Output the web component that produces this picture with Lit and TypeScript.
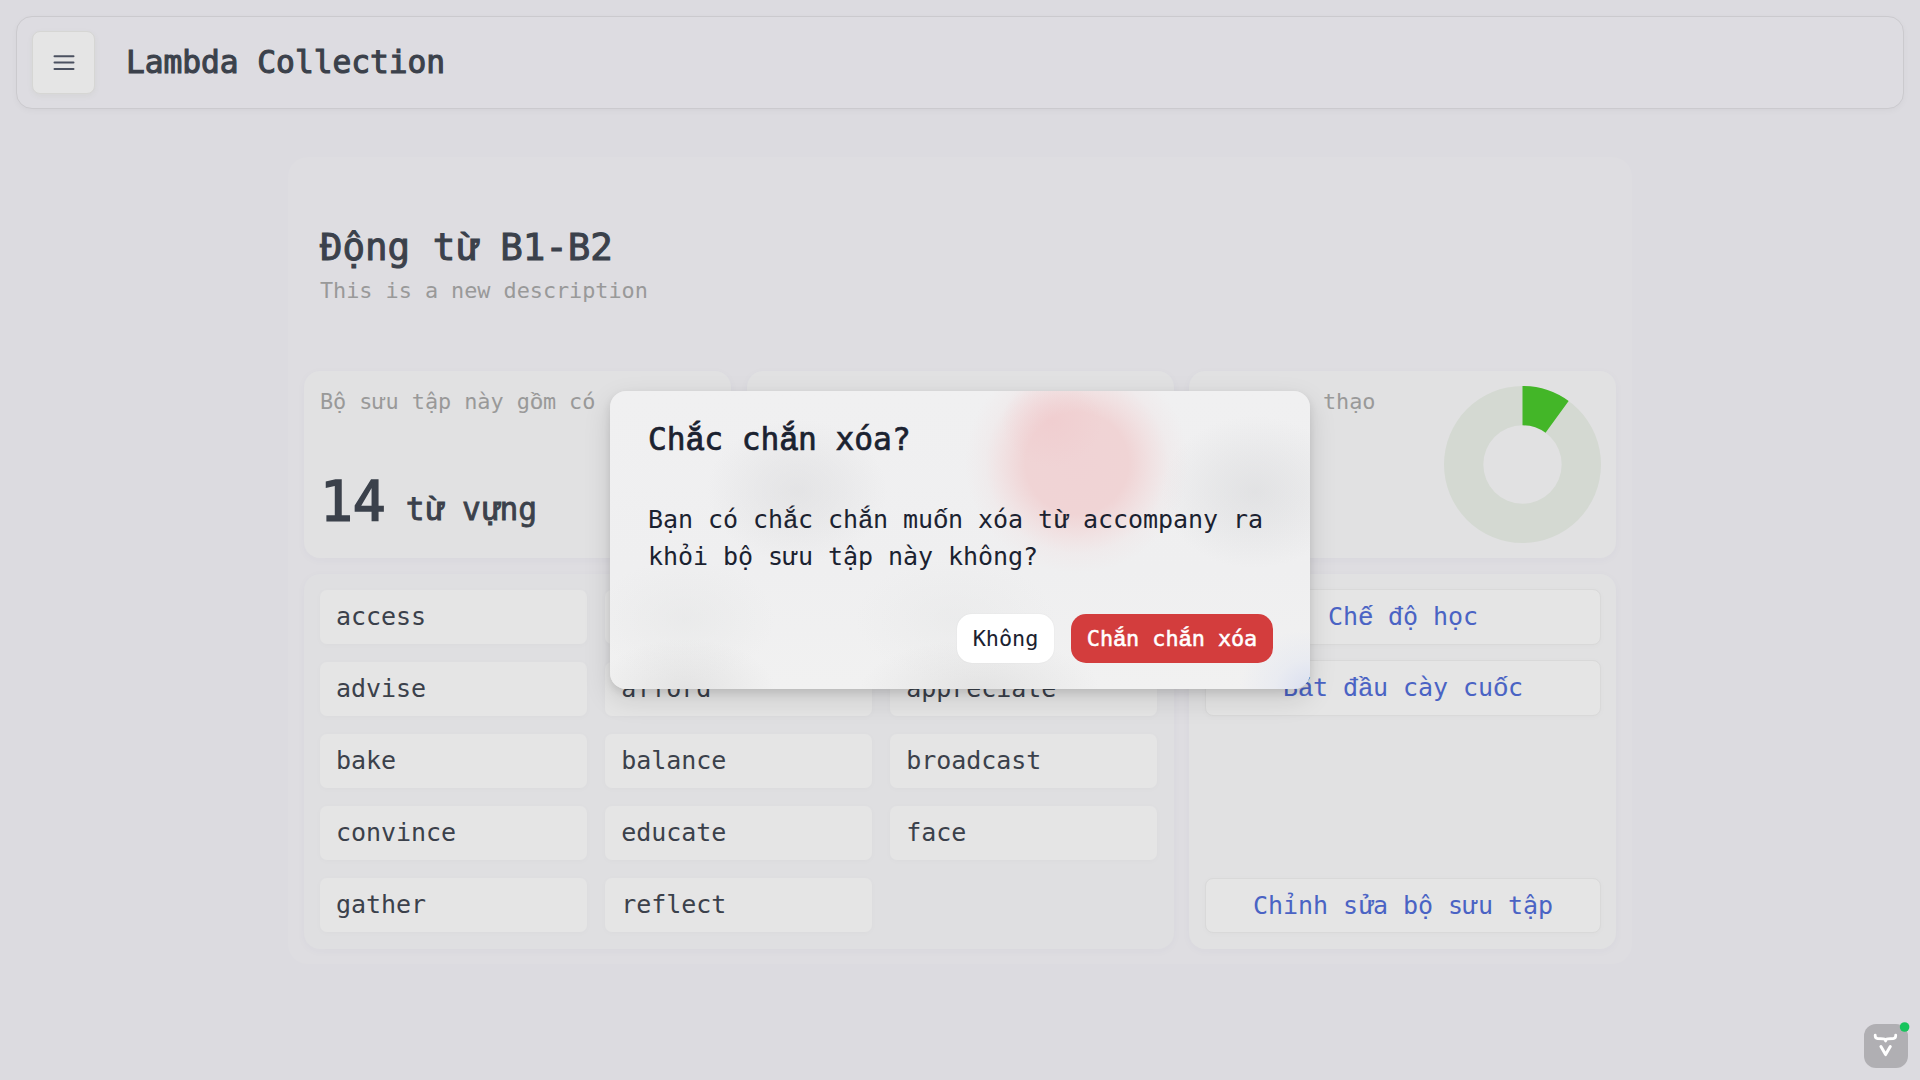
import { LitElement, html, css, svg } from "lit";
import { customElement, property } from "lit/decorators.js";

const WORDS = [
  "access", "", "",
  "advise", "afford", "appreciate",
  "bake", "balance", "broadcast",
  "convince", "educate", "face",
  "gather", "reflect",
];

const STACKED = /([ắấầếốồừửự])/;

const viet = (text: string) =>
  text.split(STACKED).map((part) => (STACKED.test(part) ? html`<span class="stacked">${part}</span>` : part));

const stackedStyle = css`
  .stacked {
    font-family: "Liberation Mono", monospace; font-size: 1.035em; letter-spacing: -0.021em;
    line-height: 0; -webkit-text-stroke-width: calc(var(--stroke, 0px) + 0.2px);
  }
`;

@customElement("share-donut")
class ShareDonut extends LitElement {
  @property({ type: Number }) share = 0;

  static styles = css`
    :host { display: block; width: 157px; height: 157px; flex: none; }
    .chart { display: block; width: 157px; height: 157px; }
    .track { fill: #d4d9d2; }
    .part { fill: #43b628; }
  `;

  render() {
    const c = 78.5, r = 78.5, i = 39.2;
    const a = this.share * Math.PI * 2;
    const large = this.share > 0.5 ? 1 : 0;
    const s = Math.sin(a), k = Math.cos(a);
    const part = `M${c} ${c - r}A${r} ${r} 0 ${large} 1 ${c + r * s} ${c - r * k}L${c + i * s} ${c - i * k}A${i} ${i} 0 ${large} 0 ${c} ${c - i}Z`;
    const track = `M${c} 0A${r} ${r} 0 0 1 ${c} 157A${r} ${r} 0 0 1 ${c} 0ZM${c} ${c - i}A${i} ${i} 0 0 0 ${c} ${c + i}A${i} ${i} 0 0 0 ${c} ${c - i}Z`;
    return html`<svg class="chart" viewBox="0 0 157 157">
      ${svg`<path class="track" d=${track}></path><path class="part" d=${part}></path>`}
    </svg>`;
  }
}

@customElement("confirm-dialog")
class ConfirmDialog extends LitElement {
  static styles = [stackedStyle, css`
    :host {
      display: flex; flex-direction: column; box-sizing: border-box;
      width: 700px; height: 298px; padding: 25px 37px 26px 38px; border-radius: 16px;
      background:
        radial-gradient(ellipse 90px 72px at 187px 100px, rgba(214, 214, 216, 0.45), rgba(214, 214, 216, 0.27) 45%, rgba(214, 214, 216, 0)),
        radial-gradient(ellipse 94px 76px at 645px 101px, rgba(210, 211, 213, 0.47), rgba(210, 211, 213, 0.28) 45%, rgba(210, 211, 213, 0)),
        radial-gradient(ellipse 50px 46px at 442px 30px, rgba(240, 200, 203, 0.5), rgba(240, 200, 203, 0)),
        radial-gradient(ellipse 112px 110px at 467px 72px, #f0d3d5 0, #f0d4d5 46%, rgba(241, 220, 221, 0.75) 65%, rgba(240, 230, 231, 0.45) 82%, rgba(240, 235, 236, 0)),
        radial-gradient(ellipse 70px 60px at 700px 298px, #dadff0, rgba(226, 230, 241, 0.5) 50%, rgba(240, 240, 240, 0)),
        radial-gradient(ellipse 90px 50px at 75px 298px, rgba(218, 218, 218, 0.6), rgba(226, 226, 226, 0)),
        radial-gradient(ellipse 120px 50px at 370px 298px, rgba(218, 218, 218, 0.6), rgba(226, 226, 226, 0)),
        radial-gradient(ellipse 90px 60px at 75px 228px, rgba(228, 229, 229, 0.5), rgba(228, 229, 229, 0)),
        radial-gradient(ellipse 100px 60px at 345px 228px, rgba(228, 229, 229, 0.4), rgba(228, 229, 229, 0)),
        linear-gradient(#f0f0f1, #efeff0 60%, #f1f1f1);
      box-shadow: 0 4px 8px rgba(0, 0, 0, 0.1), 0 10px 28px rgba(0, 0, 0, 0.12);
      color: #1b2230;
    }
    .title { --stroke: 0.7px; margin: 0; font-size: 31.25px; line-height: 46px; font-weight: 400; -webkit-text-stroke: var(--stroke) currentColor; }
    .body { margin: 39px 0 0; font-size: 25px; line-height: 37px; white-space: nowrap; }
    .actions { display: flex; justify-content: flex-end; gap: 17px; margin-top: auto; }
    .btn {
      box-sizing: border-box; height: 49px; padding: 0; border: 0; border-radius: 15px;
      font: inherit; letter-spacing: inherit; font-size: 21.875px; line-height: 46px; white-space: nowrap;
    }
    .plain { width: 97px; background: #fff; color: #1b2230; box-shadow: 0 0 2px rgba(0, 0, 0, 0.06); }
    .danger { --stroke: 0.5px; width: 202px; background: #d33d3d; color: #fff; -webkit-text-stroke: var(--stroke) currentColor; }
  `];

  render() {
    return html`
      <h2 class="title">${viet("Chắc chắn xóa?")}</h2>
      <p class="body">${viet("Bạn có chắc chắn muốn xóa từ accompany ra")}<br />${viet("khỏi bộ sưu tập này không?")}</p>
      <div class="actions">
        <button class="btn plain">Không</button>
        <button class="btn danger">${viet("Chắn chắn xóa")}</button>
      </div>
    `;
  }
}

@customElement("app-root")
class AppRoot extends LitElement {
  static styles = [stackedStyle, css`
    :host {
      display: block; position: relative; width: 1920px; height: 1080px; overflow: hidden;
      box-sizing: border-box; padding: 16px; background: #dcdbe0; color: #3b414b;
      font-family: "DejaVu Sans Mono", "Liberation Mono", monospace;
      font-size: 25px; letter-spacing: -0.05px;
    }
    .bar {
      display: flex; align-items: center; box-sizing: border-box; height: 93px; padding: 0 15px;
      border: 1px solid #cbcace; border-radius: 16px; background: #dddce1;
      box-shadow: 0 2px 6px rgba(0, 0, 0, 0.035);
    }
    .menu {
      display: grid; place-items: center; box-sizing: border-box; width: 63px; height: 63px;
      border: 1px solid #d6d6d4; border-radius: 8px; background: #e5e5e5; padding: 0;
      box-shadow: 0 2px 6px rgba(80, 90, 40, 0.05);
    }
    .menu-icon { width: 22px; height: 16px; fill: none; stroke: #4b5160; stroke-width: 2; stroke-linecap: round; }
    .brand { margin: 0 0 2px 31px; font-size: 31.25px; font-weight: 400; -webkit-text-stroke: 1.1px currentColor; }
    .panel {
      display: flex; flex-direction: column; box-sizing: border-box; width: 1344px; height: 807px;
      margin: 48px auto 0; padding: 0 16px 15px; border-radius: 20px; background: #dedde1;
    }
    .intro { height: 214px; box-sizing: border-box; padding: 62px 16px 0; }
    .name { --stroke: 1px; margin: 0; font-size: 37.5px; line-height: 56px; font-weight: 400; -webkit-text-stroke: var(--stroke) currentColor; }
    .muted { font-size: 21.875px; line-height: 32px; color: #999; }
    .cards { display: grid; grid-template-columns: repeat(3, 1fr); column-gap: 15.5px; row-gap: 16px; grid-template-rows: 187px 375px; }
    .card {
      box-sizing: border-box; border-radius: 16px; background: #e1e1e2;
      box-shadow: 0 2px 10px rgba(70, 50, 120, 0.03);
    }
    .stat { display: flex; justify-content: space-between; padding: 15px 15px 15px 16px; }
    .figure { display: flex; flex-direction: column; justify-content: space-between; white-space: nowrap; }
    .count { font-size: 54.7px; line-height: 72px; margin-bottom: -2px; -webkit-text-stroke: 1.6px currentColor; }
    .unit { --stroke: 0.8px; font-size: 31.25px; margin-left: 20px; -webkit-text-stroke: var(--stroke) currentColor; }
    .mastered { padding-left: 134px; }
    .words {
      grid-column: span 2; display: grid; grid-template-columns: repeat(3, 1fr);
      grid-auto-rows: 54px; gap: 18px; padding: 16px 16px 0; background: #dfdfe1;
    }
    .word {
      border-radius: 7px; background: #e5e5e5; padding-left: 16px; line-height: 54px;
      box-shadow: 0 1px 6px rgba(0, 0, 0, 0.022);
    }
    .links { display: flex; flex-direction: column; gap: 15px; padding: 15px 15px 16px 16px; }
    .link {
      box-sizing: border-box; height: 56px; border: 1px solid #d9d9d9; border-radius: 8px;
      background: #e5e5e5; color: #4a63c4; text-align: center; line-height: 53px;
      box-shadow: 0 1px 6px rgba(0, 0, 0, 0.022);
    }
    .last { margin-top: auto; height: 55px; line-height: 54px; }
    .dialog { position: absolute; left: 610px; top: 391px; }
    .tools { position: absolute; left: 1864px; top: 1022px; width: 46px; height: 46px; }
    .tools-icon { display: block; width: 46px; height: 46px; }
  `];

  render() {
    return html`
      <header class="bar">
        <button class="menu" aria-label="Menu">
          <svg class="menu-icon" viewBox="0 0 22 16"><path d="M1.5 1.2H20.5M1.5 7.5H20.5M1.5 13.9H20.5"></path></svg>
        </button>
        <h1 class="brand">Lambda Collection</h1>
      </header>
      <main class="panel">
        <section class="intro">
          <h2 class="name">${viet("Động từ B1-B2")}</h2>
          <div class="muted">This is a new description</div>
        </section>
        <section class="cards">
          <div class="card stat">
            <div class="figure">
              <span class="muted">${viet("Bộ sưu tập này gồm có")}</span>
              <span class="count">14<span class="unit">${viet("từ vựng")}</span></span>
            </div>
          </div>
          <div class="card stat"></div>
          <div class="card stat mastered">
            <div class="figure"><span class="muted">thạo</span></div>
            <share-donut share="0.1"></share-donut>
          </div>
          <div class="card words">${WORDS.map((w) => html`<div class="word">${w}</div>`)}</div>
          <div class="card links">
            <div class="link">${viet("Chế độ học")}</div>
            <div class="link">${viet("Bắt đầu cày cuốc")}</div>
            <div class="link last">${viet("Chỉnh sửa bộ sưu tập")}</div>
          </div>
        </section>
      </main>
      <confirm-dialog class="dialog"></confirm-dialog>
      <div class="tools">
        <svg class="tools-icon" viewBox="0 0 46 46">
          <rect x="0" y="2" width="44" height="44" rx="12" fill="#b0afb3"></rect>
          <path d="M11.2 13.2V13.8Q11.2 16.3 13.6 16.5L19.3 16.8Q21.6 17 21.6 19Q21.6 17 23.9 16.8L29.2 16.5Q31.7 16.3 31.7 13.8V13.2" fill="none" stroke="#fff" stroke-width="2.8" stroke-linecap="round" stroke-linejoin="round"></path>
          <path d="M16.9 24.6L21.6 32.6L26.3 24.6" fill="none" stroke="#fff" stroke-width="3" stroke-linecap="round" stroke-linejoin="round"></path>
          <circle cx="40.6" cy="5" r="4.8" fill="#17c45c"></circle>
        </svg>
      </div>
    `;
  }
}
